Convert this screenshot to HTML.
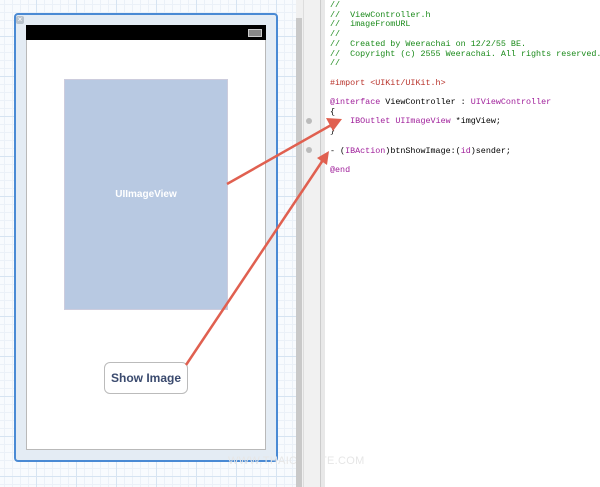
<!DOCTYPE html>
<html><head><style>
body{margin:0;width:600px;height:487px;overflow:hidden;position:relative;background:#fff;font-family:"Liberation Sans",sans-serif}
.grid{position:absolute;left:0;top:0;width:296px;height:487px;background-color:#f8fbfe;
background-image:linear-gradient(#d6e4f2 1px,transparent 1px),linear-gradient(90deg,#d6e4f2 1px,transparent 1px),linear-gradient(#ebf1f8 1px,transparent 1px),linear-gradient(90deg,#ebf1f8 1px,transparent 1px);
background-size:40px 40px,40px 40px,8px 8px,8px 8px;background-position:-4px -4px}
.abs{position:absolute}
pre{position:absolute;left:330px;top:1px;margin:0;font-family:"Liberation Mono",monospace;font-size:8.4px;line-height:9.7px;color:#000}
.c{color:#1a8a1a}.p{color:#a0209b}.r{color:#b8322a}
</style></head><body>
<div class="grid"></div>
<div class="abs" style="left:14px;top:13px;width:260px;height:445px;border:2px solid #4a8ad4;border-radius:4px;background:#e4ecf4"></div>
<div class="abs" style="left:16px;top:16px;width:8px;height:8px;background:#b8c2cc;border-radius:2px;color:#fff;font-size:8px;line-height:8px;text-align:center">×</div>
<div class="abs" style="left:26px;top:25px;width:238px;height:423px;background:#fff;border:1px solid #b9b9b9"></div>
<div class="abs" style="left:26px;top:25px;width:240px;height:15px;background:#000"></div>
<div class="abs" style="left:248px;top:29px;width:12px;height:6px;border:1px solid #ccc;background:#888"></div>
<div class="abs" style="left:64px;top:79px;width:162px;height:229px;background:#b8c9e2;border:1px solid #ccd"></div>
<div class="abs" style="left:64px;top:189px;width:164px;text-align:center;color:#fff;font-weight:bold;font-size:10px">UIImageView</div>
<div class="abs" style="left:104px;top:362px;width:82px;height:30px;border:1px solid #bbb;border-radius:6px;background:#fff;text-align:center;line-height:30px;font-weight:bold;font-size:12px;color:#3a4a6e">Show Image</div>
<div class="abs" style="left:228px;top:455px;font-size:11px;color:#e6e6e6;letter-spacing:0.3px">WWW.THAICREATE.COM</div>
<div class="abs" style="left:296px;top:0;width:7px;height:487px;background:#f0f0f0"></div>
<div class="abs" style="left:296px;top:18px;width:6px;height:469px;background:#c9c9c9"></div>
<div class="abs" style="left:303px;top:0;width:1px;height:487px;background:#ddd"></div>
<div class="abs" style="left:304px;top:0;width:16px;height:487px;background:#f1f1f1"></div>
<div class="abs" style="left:320px;top:0;width:1px;height:487px;background:#ccc"></div>
<div class="abs" style="left:321px;top:0;width:4px;height:487px;background:#e8e8e8"></div>
<div class="abs" style="left:306px;top:118px;width:6px;height:6px;border-radius:3px;background:#bbb"></div>
<div class="abs" style="left:306px;top:147px;width:6px;height:6px;border-radius:3px;background:#bbb"></div>
<pre><span class="c">//
//  ViewController.h
//  imageFromURL
//
//  Created by Weerachai on 12/2/55 BE.
//  Copyright (c) 2555 Weerachai. All rights reserved.
//</span>

<span class="r">#import &lt;UIKit/UIKit.h&gt;</span>

<span class="p">@interface</span> ViewController : <span class="p">UIViewController</span>
{
    <span class="p">IBOutlet</span> <span class="p">UIImageView</span> *imgView;
}

- (<span class="p">IBAction</span>)btnShowImage:(<span class="p">id</span>)sender;

<span class="p">@end</span></pre>
<svg class="abs" style="left:0;top:0" width="600" height="487">
<g stroke="#e06050" stroke-width="2.5" fill="#e06050">
<line x1="227" y1="184" x2="333" y2="124"/>
<polygon points="342,119 326,118 333,131" stroke="none"/>
<line x1="186" y1="365" x2="323" y2="160"/>
<polygon points="329,151 317,158 327,165" stroke="none"/>
</g></svg>
</body></html>
